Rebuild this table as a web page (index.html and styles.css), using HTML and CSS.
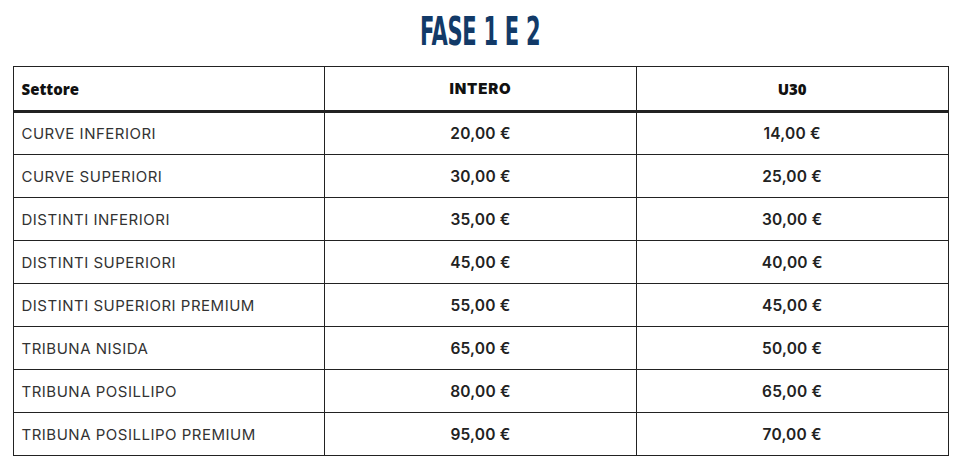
FILE: index.html
```html
<!DOCTYPE html>
<html lang="it">
<head>
<meta charset="utf-8">
<title>Fase 1 e 2</title>
<link rel="stylesheet" href="styles.css">
</head>
<body>
<h2 class="title"><span class="title-text">FASE 1 E 2</span></h2>
<table class="prices">
  <thead>
    <tr>
      <th class="col-sector">Settore</th>
      <th class="col-full">INTERO</th>
      <th class="col-u30">U30</th>
    </tr>
  </thead>
  <tbody>
    <tr><td class="sector">CURVE INFERIORI</td><td class="price">20,00 €</td><td class="price">14,00 €</td></tr>
    <tr><td class="sector">CURVE SUPERIORI</td><td class="price">30,00 €</td><td class="price">25,00 €</td></tr>
    <tr><td class="sector">DISTINTI INFERIORI</td><td class="price">35,00 €</td><td class="price">30,00 €</td></tr>
    <tr><td class="sector">DISTINTI SUPERIORI</td><td class="price">45,00 €</td><td class="price">40,00 €</td></tr>
    <tr><td class="sector">DISTINTI SUPERIORI PREMIUM</td><td class="price">55,00 €</td><td class="price">45,00 €</td></tr>
    <tr><td class="sector">TRIBUNA NISIDA</td><td class="price">65,00 €</td><td class="price">50,00 €</td></tr>
    <tr><td class="sector">TRIBUNA POSILLIPO</td><td class="price">80,00 €</td><td class="price">65,00 €</td></tr>
    <tr><td class="sector">TRIBUNA POSILLIPO PREMIUM</td><td class="price">95,00 €</td><td class="price">70,00 €</td></tr>
  </tbody>
</table>
</body>
</html>
```
FILE: styles.css
```css
html, body {
  margin: 0;
  padding: 0;
  background: #fff;
}
body {
  font-family: "Open Sans", "Liberation Sans", sans-serif;
}
.title {
  margin: 0;
  height: 66px;
  display: flex;
  justify-content: center;
  align-items: flex-start;
  box-sizing: border-box;
}
.title-text {
  display: inline-block;
  font-family: "DejaVu Sans Condensed", "DejaVu Sans", sans-serif;
  font-stretch: condensed;
  font-weight: bold;
  font-size: 39px;
  line-height: 64px;
  color: #123a68;
  transform: scaleX(0.6);
  letter-spacing: -0.5px;
}
.prices {
  width: 936px;
  margin: 0 auto;
  border-collapse: collapse;
  table-layout: fixed;
  border: 1px solid #222;
}
.prices th, .prices td {
  border: 1px solid #222;
  padding: 0 8px;
  height: 43px;
  box-sizing: border-box;
}
.prices thead th {
  border-bottom: 3px solid #222;
  height: 45px;
  color: #111;
  font-size: 15px;
}
.col-sector {
  text-align: left;
  font-family: "Open Sans", sans-serif;
  font-weight: 800;
}
.col-full {
  text-align: center;
  font-family: "Inter", sans-serif;
  font-weight: 900;
  letter-spacing: 0.8px;
}
.col-u30 {
  text-align: center;
  font-family: "Open Sans", sans-serif;
  font-weight: 800;
  font-size: 16px;
}
.sector {
  text-align: left;
  font-family: "Inter", "Liberation Sans", sans-serif;
  font-size: 15px;
  font-weight: 400;
  color: #333;
  letter-spacing: 0.5px;
}
.price {
  text-align: center;
  font-family: "Inter", sans-serif;
  font-size: 15.5px;
  font-weight: 600;
  color: #222;
  letter-spacing: 0.2px;
}
```
